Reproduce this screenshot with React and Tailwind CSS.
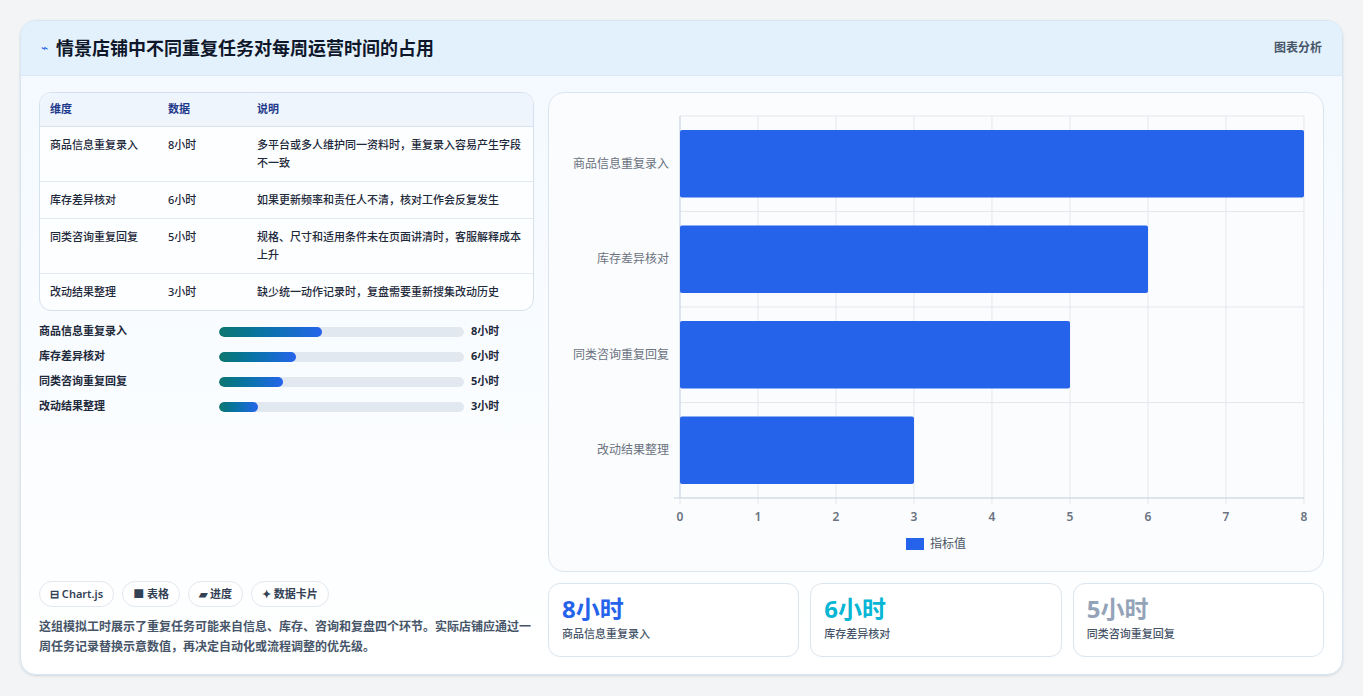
const rows = [
  { name: '商品信息重复录入', v: 8, desc: '多平台或多人维护同一资料时，重复录入容易产生字段不一致' },
  { name: '库存差异核对', v: 6, desc: '如果更新频率和责任人不清，核对工作会反复发生' },
  { name: '同类咨询重复回复', v: 5, desc: '规格、尺寸和适用条件未在页面讲清时，客服解释成本上升' },
  { name: '改动结果整理', v: 3, desc: '缺少统一动作记录时，复盘需要重新搜集改动历史' },
]

function Chart() {
  const x0 = 131, x1 = 755, y0 = 23, y1 = 405
  const sx = (x1 - x0) / 8
  const band = (y1 - y0) / 4
  return (
    <svg width="774" height="480" className="block">
      {Array.from({ length: 9 }).map((_, i) => (
        <line key={i} x1={x0 + i * sx} x2={x0 + i * sx} y1={y0} y2={y1 + 6} stroke="#e5e7eb" />
      ))}
      {[0, 1, 2, 3, 4].map((i) => (
        <line key={i} x1={x0} x2={x1} y1={y0 + i * band} y2={y0 + i * band} stroke="#e5e7eb" />
      ))}
      <line x1={x0 - 6} x2={x1} y1={y1} y2={y1} stroke="#cbd5e1" />
      <line x1={x0} x2={x0} y1={y0} y2={y1} stroke="#cbd5e1" />
      {rows.map((r, i) => (
        <g key={r.name}>
          <rect x={x0} y={y0 + i * band + 14} width={r.v * sx} height={band - 28} fill="#2563eb" rx="2" />
          <text x={x0 - 11} y={y0 + i * band + band / 2 + 4} textAnchor="end" fontSize="12" fill="#6b7280">{r.name}</text>
        </g>
      ))}
      {Array.from({ length: 9 }).map((_, i) => (
        <text key={i} x={x0 + i * sx} y={428} textAnchor="middle" fontSize="12" fontWeight="600" fill="#6b7280">{i}</text>
      ))}
      <rect x="357" y="445" width="18" height="12" fill="#2563eb" />
      <text x="381" y="455" fontSize="12" fill="#4b5563">指标值</text>
    </svg>
  )
}

export default function App() {
  return (
    <div className="min-h-screen bg-[#f3f4f6] p-5" style={{ fontFamily: '"Noto Sans", "Noto Sans CJK SC", sans-serif' }}>
      <div className="h-[655px] rounded-2xl border border-[#d6e6f5] bg-gradient-to-b from-[#f3f9ff] to-white shadow-sm overflow-hidden flex flex-col">
        <div className="h-[55px] bg-[#e3f1fd] border-b border-[#d9e9f7] flex items-center justify-between px-5">
          <div className="flex items-center gap-2">
            <span className="text-[#2563eb] text-xs">⌁</span>
            <h1 className="text-[18px] font-bold text-[#0f172a]">情景店铺中不同重复任务对每周运营时间的占用</h1>
          </div>
          <span className="text-xs font-semibold text-[#475569]">图表分析</span>
        </div>
        <div className="flex-1 flex gap-[14px] px-[18px] pt-[16px] pb-[17px]">
          <div className="w-[497px] flex flex-col">
            <div className="rounded-xl border border-[#d5e1ee] bg-white/70 overflow-hidden text-[11px] text-[#1e293b]">
              <div className="flex h-[34px] items-center bg-[#eef5fd] border-b border-[#d9e3ee] font-semibold text-[#1e3a8a]">
                <div className="w-[128px] pl-[10px]">维度</div>
                <div className="w-[89px]">数据</div>
                <div className="flex-1">说明</div>
              </div>
              {rows.map((r, i) => (
                <div key={r.name} className={`flex py-[9px] leading-[18px] font-medium ${i < 3 ? 'border-b border-[#e2e8f0]' : ''}`}>
                  <div className="w-[128px] pl-[10px]">{r.name}</div>
                  <div className="w-[89px]">{r.v}小时</div>
                  <div className="flex-1 pr-[12px]">{r.desc}</div>
                </div>
              ))}
            </div>
            <div className="mt-[12px] flex flex-col gap-[8px]">
              {rows.map((r) => (
                <div key={r.name} className="flex items-center h-[17px] text-[11px] font-semibold text-[#1e293b]">
                  <div className="w-[180px]">{r.name}</div>
                  <div className="w-[245px] h-[10px] rounded-full bg-[#e2e8f0] overflow-hidden">
                    <div className="h-full rounded-full bg-gradient-to-r from-[#0f766e] to-[#2563eb]" style={{ width: `${(r.v / 19) * 100}%` }} />
                  </div>
                  <div className="ml-[7px] font-bold">{r.v}小时</div>
                </div>
              ))}
            </div>
            <div className="mt-auto flex gap-[8px] text-[11px] font-semibold text-[#334155]">
              {['⊟ Chart.js', '■ 表格', '▰ 进度', '✦ 数据卡片'].map((c) => (
                <span key={c} className="h-[26px] px-[10px] flex items-center rounded-full border border-[#e2e8f0] bg-white">{c}</span>
              ))}
            </div>
            <p className="mt-[10px] text-[12px] leading-[20px] font-semibold text-[#475569]">这组模拟工时展示了重复任务可能来自信息、库存、咨询和复盘四个环节。实际店铺应通过一周任务记录替换示意数值，再决定自动化或流程调整的优先级。</p>
          </div>
          <div className="flex-1 flex flex-col gap-[11px]">
            <div className="h-[480px] rounded-2xl border border-[#dbe5ef] bg-[#fafcfe] overflow-hidden">
              <Chart />
            </div>
            <div className="flex gap-[11px]">
              {[['8小时', 'text-[#2563eb]', rows[0].name], ['6小时', 'text-[#06b6d4]', rows[1].name], ['5小时', 'text-[#94a3b8]', rows[2].name]].map(([v, c, l]) => (
                <div key={v} className="flex-1 h-[74px] rounded-xl border border-[#dbe5ef] bg-white px-[13px] pt-[10px]">
                  <div className={`text-[24px] leading-[30px] font-bold ${c}`}>{v}</div>
                  <div className="mt-[2px] text-[11px] font-medium text-[#475569]">{l}</div>
                </div>
              ))}
            </div>
          </div>
        </div>
      </div>
    </div>
  )
}
